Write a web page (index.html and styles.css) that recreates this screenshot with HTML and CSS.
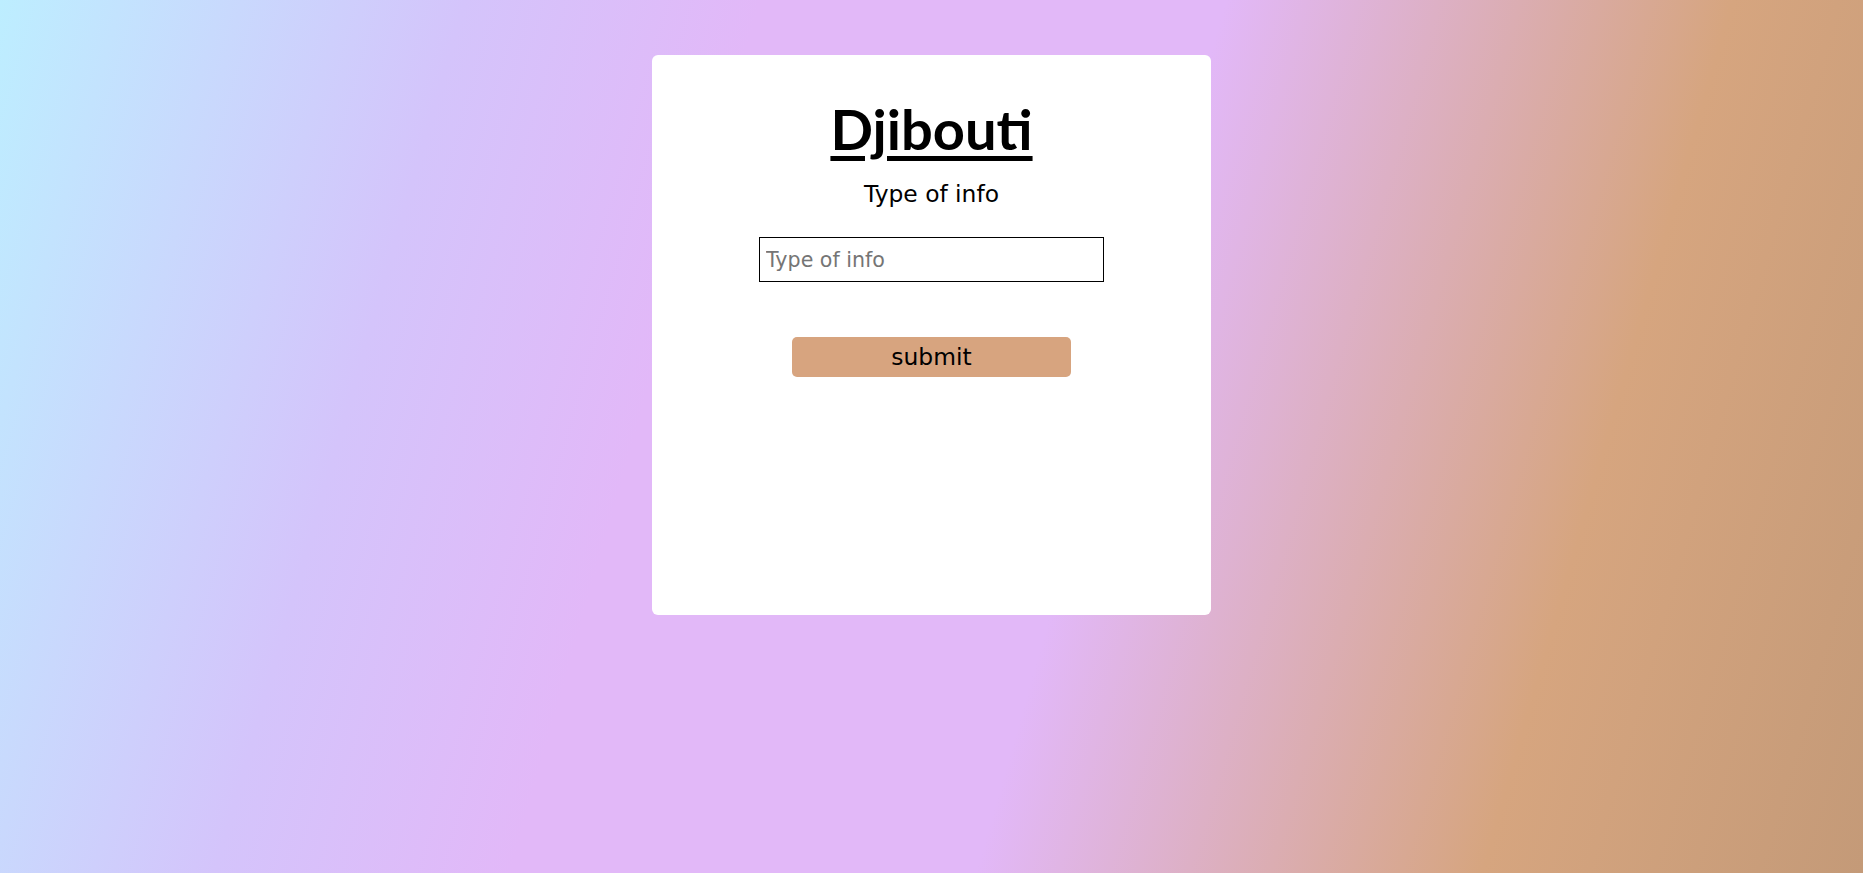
FILE: index.html
```html
<!DOCTYPE html>
<html lang="en">
<head>
<meta charset="utf-8">
<title>Djibouti</title>
<link rel="stylesheet" href="styles.css">
</head>
<body>
<main class="card">
  <h1 class="title"><a href="#" class="title-link">Djibouti</a></h1>
  <p class="subtitle">Type of info</p>
  <form class="form">
    <input class="field" type="text" placeholder="Type of info">
    <button class="submit" type="button">submit</button>
  </form>
</main>
</body>
</html>
```

FILE: styles.css
```css
html, body {
  margin: 0;
  padding: 0;
}
body {
  min-height: 100vh;
  background: linear-gradient(106deg, #bdeeff 0%, #d4c4fb 22%, #e2b8f8 36%, #e2b8f8 58%, #d6a57f 82%, #c49a78 100%);
  font-family: "DejaVu Sans", Verdana, sans-serif;
  overflow: hidden;
}
.card {
  box-sizing: border-box;
  width: 559px;
  height: 560px;
  margin: 55px auto 0;
  background: #ffffff;
  border-radius: 6px;
  display: flex;
  flex-direction: column;
  align-items: center;
  padding-top: 42px;
}
.title {
  margin: 0;
  font-family: Lato, "Noto Sans", sans-serif;
  font-weight: 700;
  font-size: 56px;
  line-height: 64px;
}
.title-link {
  color: #000;
  text-decoration: underline;
  text-decoration-thickness: 5px;
  text-underline-offset: 6px;
}
.subtitle {
  margin: 19px 0 0;
  font-size: 23.4px;
  line-height: 28px;
  color: #000;
}
.form {
  display: flex;
  flex-direction: column;
  align-items: center;
  margin-top: 29px;
}
.field {
  box-sizing: border-box;
  width: 345px;
  height: 45px;
  border: 1px solid #000;
  border-radius: 0;
  padding: 0 6px;
  font-family: "DejaVu Sans", Verdana, sans-serif;
  font-size: 20.6px;
  color: #000;
  outline: none;
  background: #fff;
}
.field::placeholder {
  color: #757575;
}
.submit {
  box-sizing: border-box;
  margin-top: 55px;
  width: 279px;
  height: 40px;
  border: none;
  border-radius: 5px;
  background: #d7a47f;
  font-family: "DejaVu Sans", Verdana, sans-serif;
  font-size: 23.4px;
  color: #000;
  padding: 0;
  cursor: pointer;
}
```
